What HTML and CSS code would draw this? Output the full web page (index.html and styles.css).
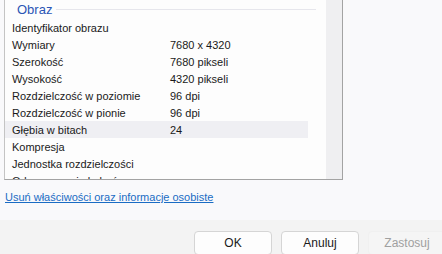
FILE: index.html
```html
<!DOCTYPE html>
<html lang="pl">
<head>
    <meta charset="UTF-8">
    <title>Właściwości</title>
    <link rel="stylesheet" href="styles.css">
</head>
<body>

<div class="details">
    <div class="listbox">
        <div class="rows">
            <div class="group">
                <span class="group-title">Obraz</span>
                <span class="group-line"></span>
            </div>
            <div class="row"><span class="name">Identyfikator obrazu</span><span class="value"></span></div>
            <div class="row"><span class="name">Wymiary</span><span class="value">7680 x 4320</span></div>
            <div class="row"><span class="name">Szerokość</span><span class="value">7680 pikseli</span></div>
            <div class="row"><span class="name">Wysokość</span><span class="value">4320 pikseli</span></div>
            <div class="row"><span class="name">Rozdzielczość w poziomie</span><span class="value">96 dpi</span></div>
            <div class="row"><span class="name">Rozdzielczość w pionie</span><span class="value">96 dpi</span></div>
            <div class="row selected"><span class="name">Głębia w bitach</span><span class="value">24</span></div>
            <div class="row"><span class="name">Kompresja</span><span class="value"></span></div>
            <div class="row"><span class="name">Jednostka rozdzielczości</span><span class="value"></span></div>
            <div class="row"><span class="name">Odwzorowanie kolorów</span><span class="value"></span></div>
        </div>
        <div class="scrollbar"></div>
    </div>
    <a class="remove-link" href="#">Usuń właściwości oraz informacje osobiste</a>
</div>

<div class="footer">
    <div class="buttons">
        <button type="button">OK</button>
        <button type="button">Anuluj</button>
        <button type="button" disabled>Zastosuj</button>
    </div>
</div>

</body>
</html>
```

FILE: styles.css
```css
body {
    margin: 0;
    font-family: "Liberation Sans", Arial, sans-serif;
    font-size: 11px;
    color: #1a1a1a;
    background-color: #f9f9fb;
    overflow: hidden;
}
.details {
    height: 220px;
    padding-left: 4px;
}
.listbox {
    display: flex;
    width: 339px;
    height: 180px;
    box-sizing: border-box;
    border: 1px solid #a3a3a3;
    border-top: none;
    border-left-color: #c4c4c4;
    background-color: #fdfdfd;
}
.rows {
    flex: 1;
    overflow: hidden;
}
.scrollbar {
    width: 16px;
    background-color: #efeff1;
}
.group {
    display: flex;
    align-items: center;
    height: 19px;
    padding-left: 12px;
    padding-right: 10px;
}
.group-title {
    color: #2b55b5;
    font-size: 13px;
}
.group-line {
    flex: 1;
    margin-left: 4px;
    border-top: 1px solid #e6e6ec;
}
.row {
    display: flex;
    align-items: center;
    width: 296px;
    height: 17px;
    padding-left: 7px;
}
.row.selected {
    background-color: #efeff3;
}
.name {
    width: 158px;
}
.remove-link {
    display: inline-block;
    margin-top: 11px;
    margin-left: 1px;
    color: #1a6cc4;
}
.footer {
    height: 34px;
    padding-top: 11px;
    box-sizing: border-box;
    background-color: #f3f3f3;
}
.buttons {
    display: flex;
    justify-content: flex-end;
    gap: 9px;
    margin-right: -4px;
}
.buttons button {
    width: 78px;
    height: 24px;
    font-family: inherit;
    font-size: 12px;
    color: #1a1a1a;
    background-color: #fdfdfd;
    border: 1px solid #d5d5d5;
    border-radius: 4px;
}
.buttons button:disabled {
    color: #a0a0a0;
    background-color: #f5f5f5;
    border-color: #f0f0f0;
}
```
